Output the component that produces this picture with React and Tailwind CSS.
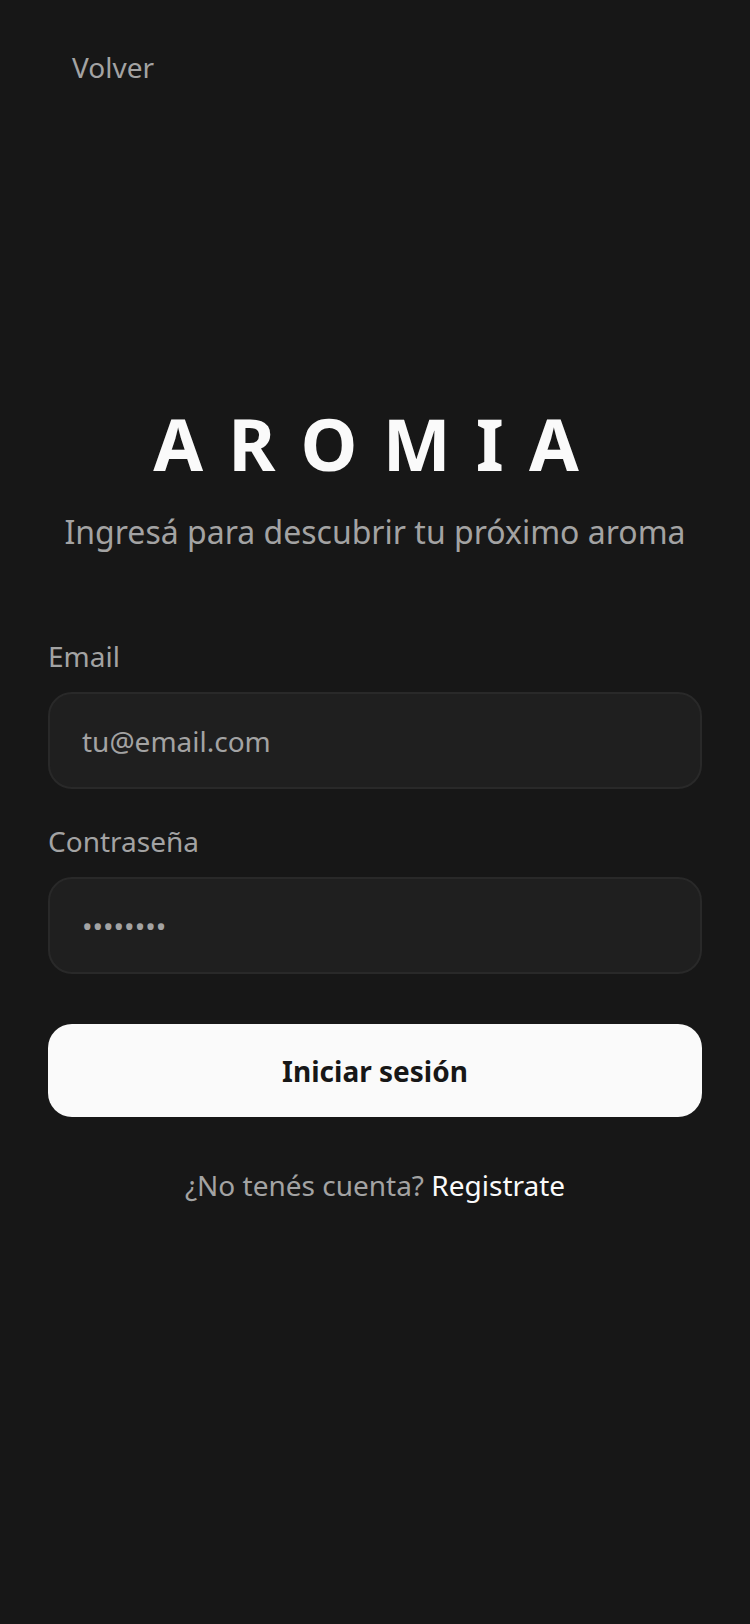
import { useState } from 'react'

const font = { fontFamily: '"Noto Sans", "Open Sans", sans-serif' }

function Field({ label, type, placeholder, value, onChange }) {
  return (
    <label className="flex flex-col">
      <span className="text-[28px] leading-[40px] text-[#a3a3a3]">{label}</span>
      <input
        type={type}
        value={value}
        onChange={e => onChange(e.target.value)}
        placeholder={placeholder}
        className="mt-4 h-[97px] w-full rounded-3xl border-2 border-[#292929] bg-[#1f1f1f] px-8 text-[28px] text-[#fafafa] outline-none placeholder:text-[#a3a3a3]"
      />
    </label>
  )
}

export default function App() {
  const [email, setEmail] = useState('')
  const [password, setPassword] = useState('')

  return (
    <div className="min-h-screen bg-[#171717] flex flex-col" style={font}>
      <div className="pl-[72px] pt-[47px]">
        <button className="text-[28px] leading-[40px] text-[#a3a3a3]">Volver</button>
      </div>

      <main className="px-12 mt-[320px] flex flex-col">
        <h1 className="text-center text-[72px] leading-none font-bold tracking-[0.35em] pl-[0.1em] text-[#fafafa]">
          AROMIA
        </h1>
        <p className="mt-[33px] text-center text-[32px] leading-[40px] text-[#a3a3a3]">
          Ingresá para descubrir tu próximo aroma
        </p>

        <form className="mt-[84px] flex flex-col" onSubmit={e => e.preventDefault()}>
          <Field label="Email" type="email" placeholder="tu@email.com" value={email} onChange={setEmail} />
          <div className="mt-8">
            <Field label="Contraseña" type="password" placeholder="••••••••" value={password} onChange={setPassword} />
          </div>
          <button
            type="submit"
            className="mt-[50px] h-[93px] w-full rounded-3xl bg-[#fafafa] text-[28px] font-bold text-[#171717]"
          >
            Iniciar sesión
          </button>
        </form>

        <p className="mt-12 text-center text-[28px] leading-[40px] text-[#a3a3a3]">
          ¿No tenés cuenta? <a href="#" className="text-[#fafafa]">Registrate</a>
        </p>
      </main>
    </div>
  )
}
